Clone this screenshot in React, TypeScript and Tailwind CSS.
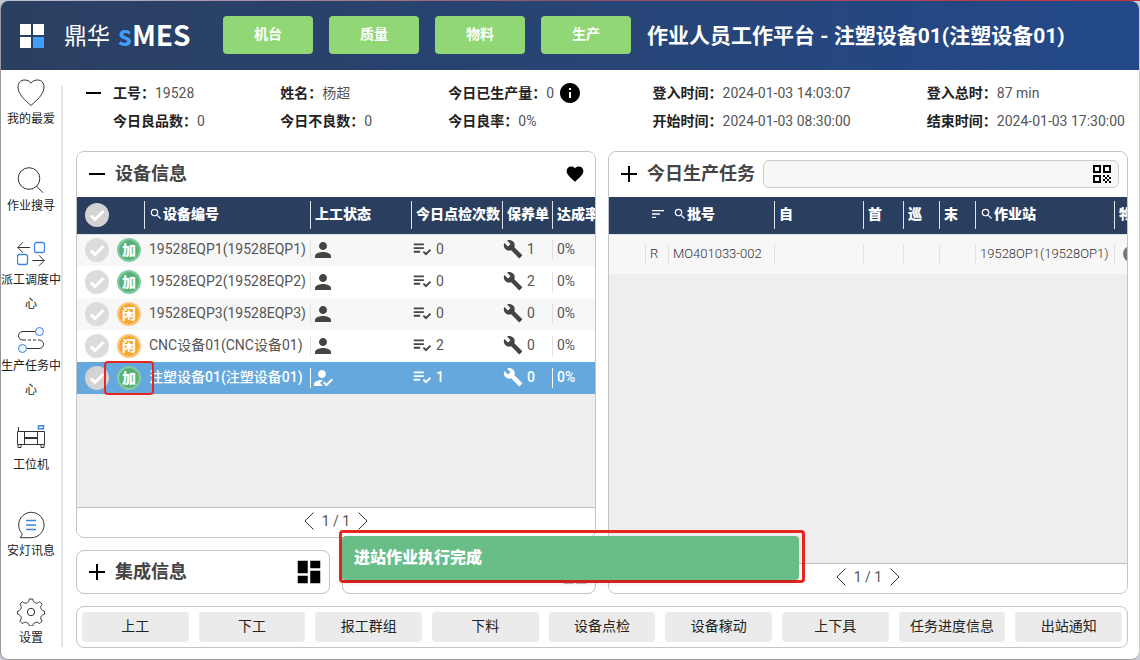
import React from "react";
import {
  MdBuild,
  MdDashboard,
  MdFavorite,
  MdHowToReg,
  MdInfo,
  MdPerson,
  MdPlaylistAddCheck,
  MdQrCode,
  MdSearch,
  MdSort,
} from "react-icons/md";

const line = { fill: "none", stroke: "#333", strokeWidth: 1 } as const;
const blue = "#3f84e0";

const icons: Record<string, React.ReactNode> = {
  heart: (
    <path {...line} d="M14 4.2C12.4 1.8 10 1 7.4 1 3.6 1 1 4 1 8c0 7.500 7.500 13.500 13 18.500C19.500 21.500 27 15.500 27 8c0-4-2.600-7-6.400-7C18 1 15.600 1.800 14 4.200Z" />
  ),
  search: (
    <g {...line}>
      <circle cx="12" cy="12.500" r="10.800" />
      <path d="M19.600 20.200 26 26.800" />
    </g>
  ),
  dispatch: (
    <g {...line}>
      <path d="M13 7.500H.8M6 2.300.8 7.500 6 12.700M15.500 20.500H27.200M22 15.300l5.200 5.200L22 25.700" />
      <rect x="17.500" y="2.500" width="10" height="10" rx="2" stroke={blue} strokeWidth="1.300" />
      <rect x=".5" y="14.500" width="10" height="10" rx="2" stroke={blue} strokeWidth="1.300" />
    </g>
  ),
  task: (
    <g {...line}>
      <path d="M18.500 5.500H6C3 5.500 1.500 7.500 1.500 9.700S3 14 6 14M22 14c3 0 4.500 2 4.500 4.200s-1.500 4.300-4.500 4.300H9.500" />
      <path d="M6 14h16" strokeDasharray="3 2" />
      <circle cx="22.500" cy="5.500" r="4" stroke={blue} fill="#edf6ff" />
      <circle cx="5.500" cy="22.500" r="4" stroke={blue} fill="#edf6ff" />
    </g>
  ),
  machine: (
    <g {...line}>
      <path d="M.5 19.500v-13h27v13zM7.500 6.500v13M20.500 6.500v13M7.500 12.500h13M7.500 13.500h13M1.500 2v4.500M1 19.500v3h3v-3M24 19.500v3h3v-3" />
      <rect x="21.500" y=".8" width="5" height="3" stroke={blue} strokeWidth="1.500" />
    </g>
  ),
  message: (
    <g {...line}>
      <path d="M3 26.700h11.500A12.700 12.700 0 1 0 5 22.600c.2 1.500-.5 3-2 4.100Z" />
      <path d="M9 9.500h10M9 14h10M9 18.500h10" stroke={blue} strokeWidth="1.300" />
    </g>
  ),
  gear: (
    <g {...line}>
      <circle cx="14" cy="14" r="3.700" />
      <path
        d="M12.300 1h3.400c.5 2.200 1 3.300 2.500 3.900s2.700.1 4.500-1.100l2.400 2.400c-1.200 1.900-1.700 3-1.100 4.500s1.800 2 3.500 2.400v3.100c-1.700.4-2.900 1-3.500 2.500s-.1 2.700 1.100 4.500l-2.400 2.400c-1.900-1.200-3-1.700-4.500-1.100s-2 1.700-2.500 3.400h-3.400c-.5-1.700-1-2.800-2.500-3.400s-2.700-.1-4.500 1.100l-2.400-2.400c1.200-1.900 1.700-3 1.100-4.500S2.200 16.600.6 16.200v-3.100c1.600-.4 2.800-.9 3.400-2.400s.1-2.700-1.100-4.500l2.400-2.400c1.900 1.200 3 1.700 4.500 1.100s2-1.700 2.500-3.900Z"
        strokeLinejoin="round"
      />
    </g>
  ),
};

const nav = [
  { icon: "heart", label: "我的最爱" },
  { icon: "search", label: "作业搜寻" },
  { icon: "dispatch", label: "派工调度中心" },
  { icon: "task", label: "生产任务中心" },
  { icon: "machine", label: "工位机" },
  { icon: "message", label: "安灯讯息" },
  { icon: "gear", label: "设置" },
];

const info = [
  ["工号", "19528"],
  ["姓名", "杨超"],
  ["今日已生产量", "0"],
  ["登入时间", "2024-01-03 14:03:07"],
  ["登入总时", "87 min"],
  ["今日良品数", "0"],
  ["今日不良数", "0"],
  ["今日良率", "0%"],
  ["开始时间", "2024-01-03 08:30:00"],
  ["结束时间", "2024-01-03 17:30:00"],
];

const equipment = [
  { name: "19528EQP1(19528EQP1)", state: "加", checks: 0, orders: 1, selected: false },
  { name: "19528EQP2(19528EQP2)", state: "加", checks: 0, orders: 2, selected: false },
  { name: "19528EQP3(19528EQP3)", state: "闲", checks: 0, orders: 0, selected: false },
  { name: "CNC设备01(CNC设备01)", state: "闲", checks: 2, orders: 0, selected: false },
  { name: "注塑设备01(注塑设备01)", state: "加", checks: 1, orders: 0, selected: true },
];

const actions = ["上工", "下工", "报工群组", "下料", "设备点检", "设备稼动", "上下具", "任务进度信息", "出站通知"];

function RoundCheck({ label, dark }: { label: string; dark?: boolean }) {
  return (
    <label className="relative block size-6 shrink-0">
      <input
        type="checkbox"
        aria-label={label}
        className={`block size-6 appearance-none rounded-full ${dark ? "bg-[#d3d3d3]" : "bg-[#dcdcdc]"}`}
      />
      <svg viewBox="0 0 24 24" className="pointer-events-none absolute inset-0 size-6">
        <path d="M6 12.500l4 4 8.500-8.500" fill="none" stroke="#fff" strokeWidth="3" />
      </svg>
    </label>
  );
}

function Toggle({ open, label }: { open: boolean; label: string }) {
  return (
    <button aria-label={label} className="flex size-4 shrink-0 items-center justify-center">
      <svg viewBox="0 0 16 16" className="size-4">
        <path d={open ? "M0 8h16" : "M0 8h16M8 0v16"} stroke="#000" strokeWidth="2" />
      </svg>
    </button>
  );
}

function Pager() {
  return (
    <div className="flex h-[30px] shrink-0 items-center justify-center gap-2 border-t border-[#bfbfbf] bg-white pb-[3px] text-sm text-[#555]">
      <button aria-label="上一页">
        <svg viewBox="0 0 10 18" className="h-[18px] w-[10px]">
          <path d="M9.500.5 1 9l8.500 8.500" fill="none" stroke="#333" />
        </svg>
      </button>
      <span>1 / 1</span>
      <button aria-label="下一页">
        <svg viewBox="0 0 10 18" className="h-[18px] w-[10px]">
          <path d="M.5.500 9 9 .5 17.500" fill="none" stroke="#333" />
        </svg>
      </button>
    </div>
  );
}

function Head({ children, search, bar = true }: { children?: React.ReactNode; search?: boolean; bar?: boolean }) {
  return (
    <th scope="col" className="p-0 text-left font-black">
      <div className={`flex h-7 items-center border-l pb-[3px] pl-1 whitespace-nowrap ${bar ? "border-[#dfe5ee]" : "border-transparent"}`}>
        {search && <MdSearch className="size-[14px] shrink-0" />}
        {children}
      </div>
    </th>
  );
}

function EquipmentPanel() {
  return (
    <section className="flex min-h-0 flex-1 flex-col overflow-hidden rounded-lg border border-[#c4c4c4] bg-[#eee]">
      <div className="flex h-[45px] shrink-0 items-center bg-white pr-[10px] pb-0.5 pl-3">
        <Toggle open label="收起设备信息" />
        <h2 className="ml-[10px] flex-1 text-lg leading-6 font-bold text-[#444]">设备信息</h2>
        <button aria-label="收藏">
          <MdFavorite className="size-5 text-black" />
        </button>
      </div>
      <div className="min-h-0 flex-1 overflow-hidden">
        <table className="w-full table-fixed border-collapse text-sm leading-5 text-[#555]">
          <colgroup>
            <col className="w-[67px]" />
            <col className="w-[166px]" />
            <col className="w-[101px]" />
            <col className="w-[91px]" />
            <col className="w-[50px]" />
            <col />
          </colgroup>
          <thead>
            <tr className="h-[37px] border-b border-[#dfe3ea] bg-[#2a3f5f] text-white">
              <th scope="col" className="p-0 pl-2">
                <RoundCheck label="全选" dark />
              </th>
              <Head search>设备编号</Head>
              <Head>上工状态</Head>
              <Head>今日点检次数</Head>
              <Head>保养单</Head>
              <Head>达成率</Head>
            </tr>
          </thead>
          <tbody>
            {equipment.map((e) => (
              <tr
                key={e.name}
                className={`h-8 ${e.selected ? "bg-[#64a8dd] font-medium text-white" : "odd:bg-[#f7f7f7] even:bg-white"}`}
              >
                <td className="p-0 pl-2">
                  <div className="flex items-center gap-2">
                    <RoundCheck label={e.name} dark={e.selected} />
                    <span
                      className={`relative flex size-6 items-center justify-center rounded-full border-2 text-sm leading-5 font-black text-white ${
                        e.state === "加" ? "border-[#86cba0] bg-[#57b37a]" : "border-[#fbc577] bg-[#f8a531]"
                      }`}
                    >
                      {e.state}
                      {e.selected && (
                        <i className="absolute -inset-x-[15px] -inset-y-[7px] z-10 rounded-sm border-2 border-[#e8261e]" />
                      )}
                    </span>
                  </div>
                </td>
                <td className="p-0 pb-0.5 pl-[5px] whitespace-nowrap">{e.name}</td>
                <td className="p-0">
                  <div className={`flex h-5 items-center border-l ${e.selected ? "border-white" : "border-[#e2e2e2]"}`}>
                    {e.selected ? (
                      <MdHowToReg className="size-6" />
                    ) : (
                      <MdPerson className="size-6 text-[#444]" />
                    )}
                  </div>
                </td>
                <td className="p-0 pb-0.5">
                  <div className="flex items-center gap-[3px]">
                    <MdPlaylistAddCheck className={`size-[22px] ${e.selected ? "text-white" : "text-[#444]"}`} />
                    {e.checks}
                  </div>
                </td>
                <td className="p-0 pb-0.5">
                  <div className="flex items-center gap-1 pl-px">
                    <MdBuild className={`size-5 ${e.selected ? "text-white" : "text-[#444]"}`} />
                    {e.orders}
                  </div>
                </td>
                <td className="p-0">
                  <div className={`h-5 border-l pl-1 leading-[18px] ${e.selected ? "border-white" : "border-[#e2e2e2]"}`}>0%</div>
                </td>
              </tr>
            ))}
          </tbody>
        </table>
      </div>
      <Pager />
    </section>
  );
}

function TaskPanel() {
  const cells = ["", "R", "MO401033-002", "", "", "", "", "19528OP1(19528OP1)"];
  return (
    <section className="flex min-h-0 flex-1 flex-col overflow-hidden rounded-lg border border-[#c4c4c4] bg-[#eee]">
      <div className="flex h-[45px] shrink-0 items-center bg-white pr-2 pb-0.5 pl-3">
        <Toggle open={false} label="展开今日生产任务" />
        <h2 className="mr-2 ml-[10px] text-lg leading-6 font-bold whitespace-nowrap text-[#444]">今日生产任务</h2>
        <div className="flex h-7 min-w-0 flex-1 items-center rounded-md border border-[#ccc] bg-[#f7f7f7] pr-1">
          <input aria-label="扫描批号" className="h-full min-w-0 flex-1 bg-transparent px-2 text-sm outline-none" />
          <button aria-label="扫码">
            <MdQrCode className="size-6 text-black" />
          </button>
        </div>
      </div>
      <div className="min-h-0 flex-1 overflow-hidden">
        <table className="w-full table-fixed border-collapse text-[13px] leading-5 text-[#555]">
          <colgroup>
            <col className="w-9" />
            <col className="w-[23px]" />
            <col className="w-[106px]" />
            <col className="w-[89px]" />
            <col className="w-10" />
            <col className="w-9" />
            <col className="w-9" />
            <col className="w-[139px]" />
            <col />
          </colgroup>
          <thead>
            <tr className="h-[37px] border-b border-[#dfe3ea] bg-[#2a3f5f] text-sm text-white">
              <Head bar={false} />
              <Head bar={false}>
                <MdSort className="size-4 shrink-0" />
              </Head>
              <Head bar={false} search>批号</Head>
              <Head>自</Head>
              <Head>首</Head>
              <Head>巡</Head>
              <Head>末</Head>
              <Head search>作业站</Head>
              <Head>物</Head>
            </tr>
          </thead>
          <tbody>
            <tr className="h-10 bg-[#f7f7f7]">
              {cells.map((c, i) => (
                <td key={i} className="p-0">
                  <div className={`h-5 pl-1 font-light whitespace-nowrap text-[#333] ${i ? "border-l border-[#e2e2e2]" : ""}`}>{c}</div>
                </td>
              ))}
              <td className="p-0">
                <div className="flex h-5 items-center border-l border-[#e2e2e2] pl-2">
                  <span className="size-4 shrink-0 rounded-full bg-[#777]" />
                </div>
              </td>
            </tr>
          </tbody>
        </table>
      </div>
      <Pager />
    </section>
  );
}

export default function App() {
  return (
    <div className="flex h-screen flex-col bg-[#c9ccd2] font-[Roboto,'Noto_Sans_CJK_SC',sans-serif]">
      <div className="h-px shrink-0 bg-linear-to-r from-[#b8c4d2] via-[#8c5069] to-[#c8303a]" />
      <div className="relative mr-px flex min-h-0 flex-1 flex-col overflow-hidden rounded-lg border-b border-l border-[#999] bg-white">
        <header className="z-10 flex h-[69px] shrink-0 items-center bg-linear-to-r from-[#2b3f60] to-[#23498a] pl-[19px] text-white">
          <div className="grid shrink-0 grid-cols-2 gap-[2px]">
            <span className="size-[11px] bg-white" />
            <span className="size-[11px] bg-white" />
            <span className="size-[11px] bg-white" />
            <span className="size-[11px] bg-[#409eff]" />
          </div>
          <div className="flex w-[179px] shrink-0 items-center gap-2 pb-1 pl-5 font-['Noto_Sans_CJK_SC',sans-serif] leading-8 whitespace-nowrap">
            <span className="text-[23px]">鼎华</span>
            <span className="text-[28px] font-bold">
              <span className="text-[#409eff]">s</span>MES
            </span>
          </div>
          <nav className="flex shrink-0 gap-4 pb-0.5">
            {["机台", "质量", "物料", "生产"].map((t) => (
              <button key={t} className="h-[38px] w-[90px] rounded bg-[#91d775] pb-0.5 text-sm font-bold">
                {t}
              </button>
            ))}
          </nav>
          <h1 className="ml-4 text-[21px] leading-8 font-bold whitespace-nowrap">
            作业人员工作平台 - 注塑设备01(注塑设备01)
          </h1>
        </header>

        <div className="flex min-h-0 flex-1">
          <aside className="relative flex w-[62px] shrink-0 flex-col">
            <nav className="-mt-2 -mb-2 grid flex-1 auto-rows-fr pr-0.5">
              {nav.map((n) => (
                <a key={n.label} href="#" className="flex flex-col items-center justify-center text-center text-xs leading-6 text-[#222]">
                  <svg viewBox="0 0 28 28" className="size-7 shrink-0">
                    {icons[n.icon]}
                  </svg>
                  {n.label}
                </a>
              ))}
            </nav>
            <span className="absolute top-4 right-0 bottom-3 w-0.5 bg-[#e4e4e4]" />
          </aside>

          <main className="flex min-w-0 flex-1 flex-col gap-3 pt-[9px] pr-[11px] pb-[11px] pl-[13px]">
            <div className="flex shrink-0 gap-3 pl-[10px]">
              <button aria-label="收起人员信息" className="flex h-7 w-[15px] shrink-0 items-center">
                <svg viewBox="0 0 15 2" className="h-0.5 w-[15px]">
                  <path d="M0 1h15" stroke="#000" strokeWidth="2" />
                </svg>
              </button>
              <dl className="mb-[4px] grid flex-1 grid-cols-[167fr_168fr_204fr_274fr_201fr] text-sm leading-7 whitespace-nowrap">
                {info.map(([k, v]) => (
                  <div key={k} className="flex h-7 min-w-0 items-center">
                    <dt className="font-bold text-[#222]">{k}：</dt>
                    <dd className="text-[#555]">{v}</dd>
                    {k === "今日已生产量" && <MdInfo className="ml-1 size-6 text-black" />}
                  </div>
                ))}
              </dl>
            </div>

            <div className="flex min-h-0 flex-1 gap-3">
              <div className="flex min-w-0 flex-1 flex-col gap-3">
                <EquipmentPanel />
                <div className="flex shrink-0 gap-3">
                  <section className="flex h-11 flex-1 items-center rounded-lg border border-[#c4c4c4] pr-1 pl-3">
                    <Toggle open={false} label="展开集成信息" />
                    <h2 className="ml-[10px] flex-1 text-lg leading-6 font-bold text-[#444]">集成信息</h2>
                    <MdDashboard className="size-8 p-px text-black" />
                  </section>
                  <section className="flex h-11 flex-1 items-center justify-end gap-6 rounded-lg border border-[#c4c4c4] pr-1 pl-3">
                    <MdFavorite className="size-6 text-black" />
                    <MdDashboard className="size-8 p-px text-black" />
                  </section>
                </div>
              </div>
              <div className="flex min-w-0 flex-1 flex-col">
                <TaskPanel />
              </div>
            </div>

            <div className="flex shrink-0 gap-[10px] rounded-lg border border-[#c4c4c4] p-[5px]">
              {actions.map((a) => (
                <button key={a} className="h-[30px] min-w-0 flex-1 rounded bg-[#ebebeb] pb-0.5 text-sm whitespace-nowrap text-[#222]">
                  {a}
                </button>
              ))}
            </div>
          </main>
        </div>

        <div className="absolute inset-x-0 bottom-[76px] z-20 flex justify-center pl-1">
          <div className="w-[466px] rounded-sm border-3 border-[#e8261e] pt-[3px] pr-[3px]">
            <div role="status" className="h-11 rounded bg-[#69bd87] px-3 text-base leading-[44px] font-black text-white shadow-md">
              进站作业执行完成
            </div>
          </div>
        </div>
      </div>
    </div>
  );
}
